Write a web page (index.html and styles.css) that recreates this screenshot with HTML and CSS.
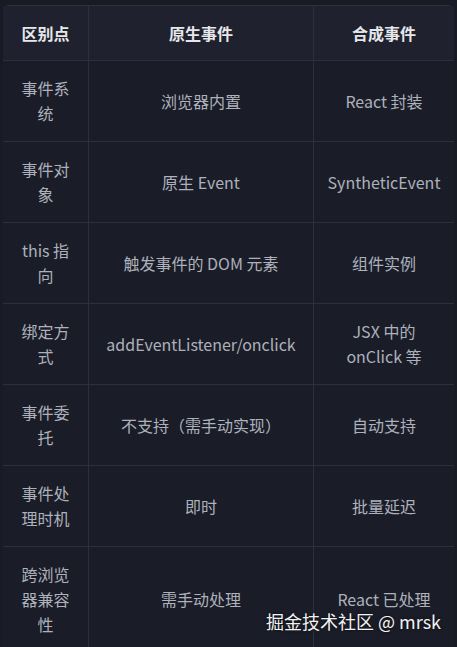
FILE: index.html
```html
<!DOCTYPE html>
<html lang="zh-CN">
<head>
<meta charset="utf-8">
<link rel="stylesheet" href="styles.css">
</head>
<body>
<div class="wrap">
  <table class="cmp">
    <colgroup><col class="w1"><col class="w2"><col class="w3"></colgroup>
    <thead>
      <tr><th class="c1">区别点</th><th class="c2">原生事件</th><th class="c3">合成事件</th></tr>
    </thead>
    <tbody>
      <tr><td class="c1">事件系统</td><td class="c2">浏览器内置</td><td class="c3">React 封装</td></tr>
      <tr><td class="c1">事件对象</td><td class="c2">原生 Event</td><td class="c3">SyntheticEvent</td></tr>
      <tr><td class="c1">this 指向</td><td class="c2">触发事件的 DOM 元素</td><td class="c3">组件实例</td></tr>
      <tr><td class="c1">绑定方式</td><td class="c2">addEventListener/onclick</td><td class="c3">JSX 中的 onClick 等</td></tr>
      <tr><td class="c1">事件委托</td><td class="c2">不支持（需手动实现）</td><td class="c3">自动支持</td></tr>
      <tr><td class="c1">事件处理时机</td><td class="c2">即时</td><td class="c3">批量延迟</td></tr>
      <tr><td class="c1">跨浏览器兼容性</td><td class="c2">需手动处理</td><td class="c3">React 已处理</td></tr>
    </tbody>
  </table>
</div>
<div class="watermark">掘金技术社区 @ mrsk</div>
</body>
</html>
```

FILE: styles.css
```css
html, body {
  margin: 0;
  background: #181b24;
}
body {
  width: 457px;
  height: 647px;
  overflow: hidden;
  position: relative;
  font-family: "Noto Sans CJK SC", "Noto Sans", sans-serif;
}
.wrap {
  padding: 5px 3px 0 3px;
}
.cmp {
  width: 451px;
  table-layout: fixed;
  border-collapse: separate;
  border-spacing: 0;
  border-top: 1px solid #2c303c;
  border-radius: 6px 6px 0 0;
  background: #1a1d28;
}
.w1 { width: 85px; }
.w2 { width: 225px; }
.w3 { width: 141px; }
.cmp th, .cmp td {
  text-align: center;
  vertical-align: middle;
  font-size: 16px;
  line-height: 25px;
  padding: 15px 14px;
  border-bottom: 1px solid #2c303c;
}
.cmp th {
  background: #1f222e;
  color: #e6e7ea;
  font-weight: 700;
  padding: 15px 14px 14px;
}
.cmp td {
  color: #adb1bb;
}
.c2 { border-left: 1px solid #2c303c; }
.c3 { border-left: 1px solid #2c303c; }
.cmp th.c3, .cmp td.c3 { padding-left: 12px; padding-right: 12px; }
.watermark {
  position: absolute;
  left: 266px;
  top: 608px;
  font-family: "Noto Sans CJK SC", "Noto Sans", sans-serif;
  font-size: 18px;
  line-height: 26px;
  color: #f2f2f2;
  text-shadow: 0 0 3px rgba(0,0,0,0.7);
  white-space: nowrap;
}
```
